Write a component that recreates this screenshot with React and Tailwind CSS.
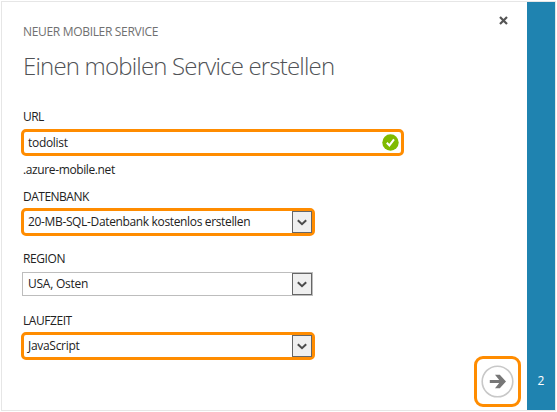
import React from "react";

function Label({ className = "", children }) {
  return (
    <div className={`flex h-4 items-center whitespace-nowrap pl-[2px] text-[12px] leading-4 ${className}`}>
      <span>{children}</span>
    </div>
  );
}

function Chevron() {
  return (
    <span className="flex h-[22px] w-5 shrink-0 items-center justify-center border border-[#666] bg-[#efefef]">
      <svg width="10" height="7" viewBox="0 0 10 7" fill="none" stroke="#4a4a4a" strokeWidth="2">
        <path d="M.8 1.2 5 5.2 9.2 1.2" />
      </svg>
    </span>
  );
}

function Select({ highlighted, textClass, children }) {
  const frame = highlighted
    ? "h-7 w-[294px] rounded-[5px] border-[3px] border-[#ff8c00] pl-1"
    : "ml-px h-6 w-[291px] border border-[#bdbdbd] pl-[5px]";
  return (
    <div className={`flex items-center justify-between whitespace-nowrap text-[12px] leading-4 ${frame}`}>
      <span className={textClass}>{children}</span>
      <Chevron />
    </div>
  );
}

export default function App() {
  return (
    <div className="h-[412px] w-[557px] overflow-hidden bg-white pl-px pt-px font-['Open_Sans','Noto_Sans',sans-serif] text-[#222]">
      <div className="flex h-[410px] w-[555px] border border-[#e6e6e6]">
        <main className="flex flex-1 flex-col pl-[19px]">
          <header className="flex h-[110px] justify-between pl-[2px]">
            <div className="whitespace-nowrap">
              <div className="mt-[22px] h-4 text-[12px] leading-4 tracking-[-0.32px] text-[#707070]">NEUER MOBILER SERVICE</div>
              <h1 className="mt-2 h-9 text-[24px] font-light leading-9 tracking-[-0.81px] text-[#505256]">Einen mobilen Service erstellen</h1>
            </div>
            <button aria-label="Schließen" className="mr-[19px] mt-[14px] h-[9px] w-[9px]">
              <svg width="9" height="9" viewBox="0 0 9 9" fill="none" stroke="#555" strokeWidth="2.2">
                <path d="M1 1 8 8M8 1 1 8" />
              </svg>
            </button>
          </header>
          <div className="flex">
            <form className="w-[383px]">
              <Label className="-mt-[3px] tracking-[-0.6px]">URL</Label>
              <div className="mt-1 flex h-[27px] items-center justify-between rounded-[5px] border-[3px] border-[#ff8c00] pl-1 pr-[2px] text-[12px] leading-4">
                <span className="tracking-[-0.3px]">todolist</span>
                <svg width="17" height="17" viewBox="0 0 17 17" fill="none">
                  <circle cx="8.5" cy="8.5" r="8.2" fill="#7fba00" />
                  <path d="m4.8 8.7 2.6 2.7 4.6-6" stroke="#fff" strokeWidth="2" />
                </svg>
              </div>
              <Label className="mt-[6px] tracking-[-0.38px]">.azure-mobile.net</Label>
              <Label className="mb-[3px] mt-[11px] tracking-[-0.5px]">DATENBANK</Label>
              <Select highlighted textClass="tracking-[-0.35px]">20-MB-SQL-Datenbank kostenlos erstellen</Select>
              <Label className="mb-[5px] mt-[15px] tracking-[-0.4px]">REGION</Label>
              <Select textClass="tracking-[-0.25px]">USA, Osten</Select>
              <Label className="mb-[3px] mt-[17px] tracking-[-0.45px]">LAUFZEIT</Label>
              <Select highlighted textClass="tracking-[-0.3px]">JavaScript</Select>
            </form>
            <button aria-label="Weiter" className="ml-[70px] mt-[244px] flex h-[51px] w-[47px] shrink-0 items-center justify-center rounded-[9px] border-[3px] border-[#ff8c00]">
              <svg width="33" height="33" viewBox="0 0 33 33" fill="none" className="-mt-px">
                <circle cx="16.5" cy="16.5" r="15.3" stroke="#c8c8c8" strokeWidth="1.6" />
                <path d="M8.8 14.9H18.2L14 9.8H18.8L25 16.5 18.8 23.2H14L18.2 18.1H8.8Z" fill="#777" />
              </svg>
            </button>
          </div>
        </main>
        <aside className="flex w-7 items-end justify-center bg-[#1f83b0] pb-[21px] text-[12px] leading-4 text-white">2</aside>
      </div>
    </div>
  );
}
